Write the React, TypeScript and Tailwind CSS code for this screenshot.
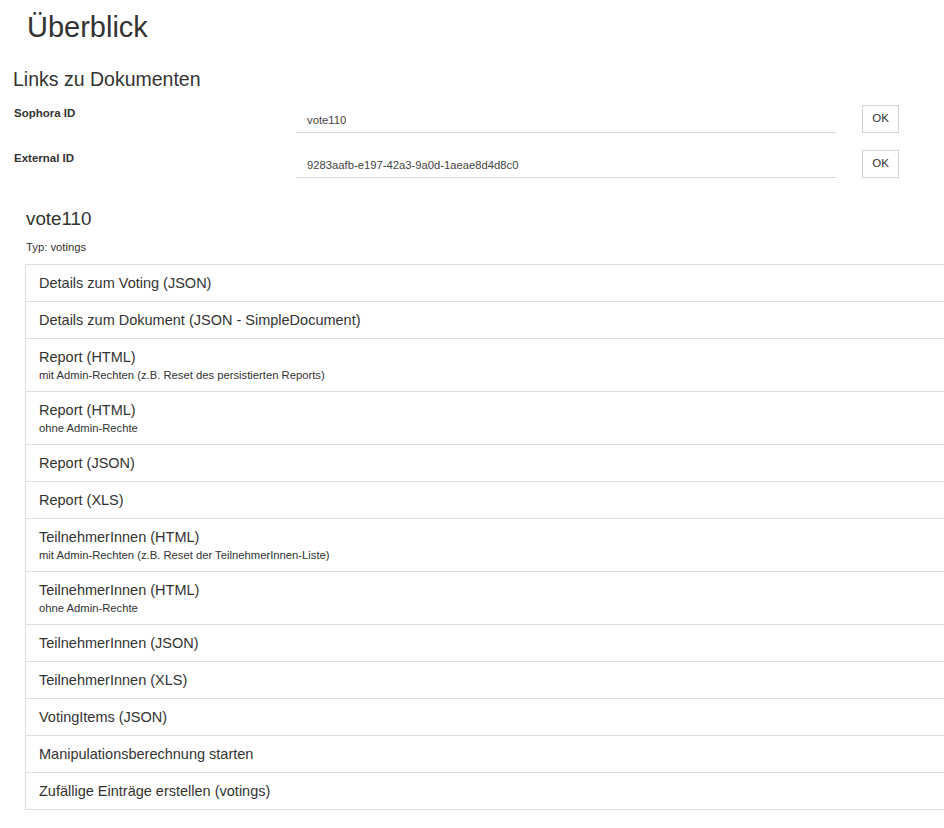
const links: { title: string; sub?: string }[] = [
  { title: "Details zum Voting (JSON)" },
  { title: "Details zum Dokument (JSON - SimpleDocument)" },
  { title: "Report (HTML)", sub: "mit Admin-Rechten (z.B. Reset des persistierten Reports)" },
  { title: "Report (HTML)", sub: "ohne Admin-Rechte" },
  { title: "Report (JSON)" },
  { title: "Report (XLS)" },
  { title: "TeilnehmerInnen (HTML)", sub: "mit Admin-Rechten (z.B. Reset der TeilnehmerInnen-Liste)" },
  { title: "TeilnehmerInnen (HTML)", sub: "ohne Admin-Rechte" },
  { title: "TeilnehmerInnen (JSON)" },
  { title: "TeilnehmerInnen (XLS)" },
  { title: "VotingItems (JSON)" },
  { title: "Manipulationsberechnung starten" },
  { title: "Zufällige Einträge erstellen (votings)" },
];

function IdRow({ label, value }: { label: string; value: string }) {
  return (
    <div className="flex items-start h-[28px]">
      <div className="w-[282px] ml-[14px] font-bold text-[11.5px] leading-[16px] text-[#333]">{label}</div>
      <div className="w-[540px] h-[28px] border-b border-[#d9d9d9] pl-[11px] pt-[7px] text-[11.25px] leading-[16px] text-[#444]">
        {value}
      </div>
      <button className="ml-[26px] w-[37px] h-[28px] border border-[#d4d4d4] bg-white text-[11.5px] text-[#333]">
        OK
      </button>
    </div>
  );
}

export default function App() {
  return (
    <div className="w-full overflow-x-hidden bg-white text-[#333]" style={{ fontFamily: '"Liberation Sans", Arial, sans-serif' }}>
      <h1 className="ml-[27px] pt-[11px] text-[29px] leading-[32px] font-normal">Überblick</h1>
      <h2 className="ml-[13px] mt-[24px] text-[19.5px] leading-[24px] font-normal">Links zu Dokumenten</h2>

      {/* ID form */}
      <div className="mt-[14px] flex flex-col gap-[17px]">
        <IdRow label="Sophora ID" value="vote110" />
        <IdRow label="External ID" value="9283aafb-e197-42a3-9a0d-1aeae8d4d8c0" />
      </div>

      {/* Document */}
      <div className="ml-[26px] mt-[30px] text-[18.8px] leading-[22px]">vote110</div>
      <div className="ml-[26px] mt-[9px] text-[11.25px] leading-[16px]">Typ: votings</div>

      <div className="ml-[25px] mt-[9px] w-[940px] border-t border-[#dedede]">
        {links.map((l, i) => (
          <div key={i} className="border-x border-b border-[#dedede] px-[13px] py-[8px] cursor-pointer">
            <div className="text-[14.5px] leading-[20px]">{l.title}</div>
            {l.sub && <div className="text-[11.25px] leading-[16px]">{l.sub}</div>}
          </div>
        ))}
      </div>
    </div>
  );
}
